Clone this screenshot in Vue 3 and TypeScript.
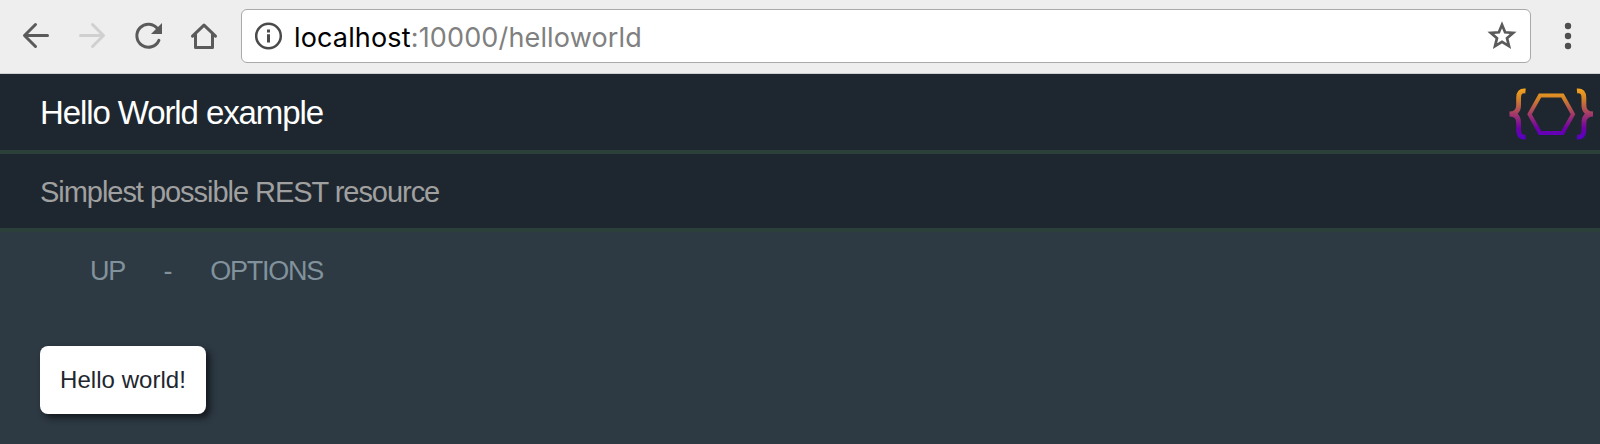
<script setup lang="ts">
const title = 'Hello World example'
const description = 'Simplest possible REST resource'
const links: string[] = ['UP', 'OPTIONS']
const message = 'Hello world!'
</script>

<template>
  <div class="window">
    <div class="toolbar">
      <svg class="nav-icons" width="240" height="72" viewBox="0 0 240 72" fill="none" stroke-width="3" stroke-linecap="round" stroke-linejoin="round">
        <path d="M47.500 35.500H25M35.500 24.500L24.500 35.500L35.500 46.500" stroke="#5a5a5a" />
        <path d="M80.500 35.500H103M92.500 24.500L103.500 35.500L92.500 46.500" stroke="#d0d0d0" />
        <path d="M157.800 29.100A11.500 11.500 0 1 0 158.900 40.300" stroke="#5a5a5a" />
        <path d="M162 23V34H151Z" fill="#5a5a5a" />
        <path d="M192.500 36.200L204 25.200L215.500 36.200M195.500 34V47.500H212.500V34" stroke="#5a5a5a" />
      </svg>
      <div class="address">
        <svg class="info" width="28" height="28" viewBox="0 0 28 28">
          <circle cx="13.500" cy="14" r="12.300" fill="none" stroke="#4a4a4a" stroke-width="2.500" />
          <path d="M12 7.600h3v3h-3zM12 12.300h3v8.300h-3z" fill="#4a4a4a" />
        </svg>
        <span class="url"><span class="host">localhost</span>:10000/helloworld</span>
        <svg class="star" width="32" height="32" viewBox="0 0 32 32">
          <path d="M16 4.800L19.100 12.300L27.200 12.900L21 18.200L23 26.100L16 21.800L9 26.100L11 18.200L4.800 12.900L12.900 12.300Z" fill="none" stroke="#5a5a5a" stroke-width="2.700" />
        </svg>
      </div>
      <svg class="menu" width="8" height="28" viewBox="0 0 8 28" fill="#4f4f4f">
        <circle cx="4" cy="4" r="3.200" /><circle cx="4" cy="14" r="3.200" /><circle cx="4" cy="24" r="3.200" />
      </svg>
    </div>
    <header class="bar">
      <h1>{{ title }}</h1>
      <svg class="logo" width="84" height="54" viewBox="0 0 84 54" fill="none">
        <defs>
          <linearGradient id="fade" gradientUnits="userSpaceOnUse" x1="0" y1="2" x2="0" y2="52">
            <stop offset="0" stop-color="#f5a31d" />
            <stop offset=".2" stop-color="#d28228" />
            <stop offset=".5" stop-color="#a33a68" />
            <stop offset=".78" stop-color="#7000a5" />
            <stop offset="1" stop-color="#5700c8" />
          </linearGradient>
        </defs>
        <g stroke="url(#fade)">
          <path d="M16.500 4C11.500 3.500 9.600 6 9.600 11V18C9.600 24 6.500 27 .5 27C6.500 27 9.600 30 9.600 36V43C9.600 48 11.500 50.500 16.500 50" stroke-width="4.800" />
          <path d="M68 4C73 3.500 74.900 6 74.900 11V18C74.900 24 78 27 84 27C78 27 74.900 30 74.900 36V43C74.900 48 73 50.500 68 50" stroke-width="4.800" />
          <path d="M31 8.500H53.500L64 27.200L53.500 46H31L20.500 27.200Z" stroke-width="4" />
        </g>
      </svg>
    </header>
    <div class="bar sub"><h2>{{ description }}</h2></div>
    <nav>
      <template v-for="(link, i) in links" :key="link">
        <span v-if="i > 0" class="dash">-</span>
        <a>{{ link }}</a>
      </template>
    </nav>
    <main><div class="card">{{ message }}</div></main>
  </div>
</template>

<style>
body { margin: 0; background: #2d3943; }
</style>

<style scoped>
.window { height: 444px; overflow: hidden; background: #2d3943; font-family: "Liberation Sans", Arial, sans-serif; }
.toolbar { display: flex; align-items: center; box-sizing: border-box; height: 74px; padding-bottom: 1px; background: #eee; border-bottom: 1px solid #cfcfcf; }
.nav-icons { flex: none; }
.address { display: flex; align-items: center; box-sizing: border-box; width: 1290px; height: 54px; margin-left: 1px; padding: 0 12px 0 13px; background: #fff; border: 1px solid #a9a9a9; border-radius: 6px; }
.info { flex: none; }
.url { margin-left: 11px; padding-top: 2px; font: 27px Inter, sans-serif; letter-spacing: 0.15px; color: #808080; white-space: nowrap; }
.host { color: #000; }
.star { margin-left: auto; }
.menu { margin-left: 33px; }
.bar { display: flex; align-items: center; justify-content: space-between; box-sizing: border-box; height: 80px; padding: 3px 7px 0 40px; background: #1e272f; border-bottom: 4px solid #2a4038; }
.sub { height: 78px; }
h1, h2 { margin: 0; font-weight: 400; white-space: nowrap; }
h1 { padding-bottom: 2px; font-size: 33px; color: #fff; letter-spacing: -1.1px; }
h2 { font-size: 29px; color: #a0a0a0; letter-spacing: -1.04px; }
nav { display: flex; align-items: center; box-sizing: border-box; height: 76px; padding: 2px 0 0 90px; font-size: 27px; color: #81929c; letter-spacing: -1.25px; }
.dash { margin: 0 39px 0 38.5px; }
main { display: flex; padding: 38px 40px; }
.card { box-sizing: border-box; width: 166px; height: 68px; padding-left: 20px; line-height: 67px; font-size: 24px; letter-spacing: 0.05px; color: #1e272f; white-space: nowrap; background: #fff; border-radius: 8px; box-shadow: 4px 4px 6px #14191e; }
</style>
